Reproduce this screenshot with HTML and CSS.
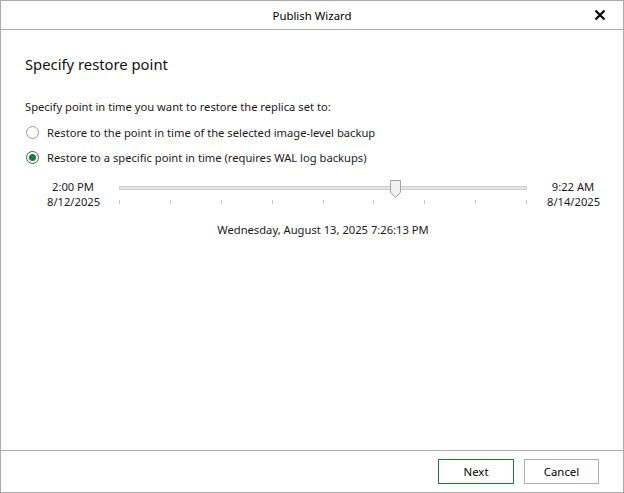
FILE: index.html
```html
<!DOCTYPE html>
<html>
<head>
<meta charset="utf-8">
<link rel="stylesheet" href="styles.css">
</head>
<body>
<div class="window">
  <div class="titlebar">
    <span class="title">Publish Wizard</span>
    <span class="close"><svg width="12" height="12" viewBox="0 0 12 12"><path d="M1.5 1.5 L10.5 10.5 M10.5 1.5 L1.5 10.5" stroke="#000" stroke-width="2.2" fill="none"/></svg></span>
  </div>
  <div class="content">
    <h1 class="heading">Specify restore point</h1>
    <p class="prompt">Specify point in time you want to restore the replica set to:</p>
    <div class="radios">
      <label class="radio"><span class="circle"></span>Restore to the point in time of the selected image-level backup</label>
      <label class="radio"><span class="circle checked"></span>Restore to a specific point in time (requires WAL log backups)</label>
    </div>
    <div class="slider-row">
      <div class="edge-label"><div>2:00 PM</div><div>8/12/2025</div></div>
      <div class="slider-col">
        <div class="slider">
          <div class="track"></div>
          <div class="thumb"><svg width="11" height="18" viewBox="0 0 11 18"><path d="M0.5 0.5 H10.5 V12.5 L5.5 17.3 L0.5 12.5 Z" fill="#f0f0f0" stroke="#a2a2a2"/></svg></div>
          <div class="ticks">
            <i></i><i></i><i></i><i></i><i></i><i></i><i></i><i></i><i></i>
          </div>
        </div>
        <div class="selected-date">Wednesday, August 13, 2025 7:26:13 PM</div>
      </div>
      <div class="edge-label"><div>9:22 AM</div><div>8/14/2025</div></div>
    </div>
  </div>
  <div class="footer">
    <button class="btn primary">Next</button>
    <button class="btn cancel">Cancel</button>
  </div>
</div>
</body>
</html>
```

FILE: styles.css
```css
* { box-sizing: border-box; }
html, body { margin: 0; padding: 0; background: #fff; }
body {
  font-family: "Noto Sans", "Open Sans", sans-serif;
  font-size: 11.2px;
  color: #1a1a1a;
}
.window {
  width: 624px;
  height: 493px;
  border: 1px solid #ababab;
  display: flex;
  flex-direction: column;
  background: #fff;
}
.titlebar {
  height: 29px;
  border-bottom: 1px solid #ababab;
  display: flex;
  align-items: center;
  justify-content: center;
  position: relative;
}
.title { font-size: 11.4px; color: #000; }
.close {
  position: absolute;
  right: 17px;
  top: 8px;
  width: 12px;
  height: 12px;
  display: flex;
}
.content {
  flex: 1;
  padding: 22px 24px 0 24px;
}
.heading {
  font-size: 14.8px;
  font-weight: normal;
  margin: 0;
  line-height: 24px;
  color: #111;
}
.prompt {
  margin: 22px 0 0 0;
  line-height: 18px;
}
.radios {
  display: flex;
  flex-direction: column;
  gap: 7px;
  margin-top: 7px;
}
.radio {
  display: flex;
  align-items: center;
  height: 18px;
}
.circle {
  width: 13px;
  height: 13px;
  border: 1px solid #9a9a9a;
  border-radius: 50%;
  margin: 0 8px 0 1px;
  display: flex;
  align-items: center;
  justify-content: center;
}
.circle.checked { border-color: #555; }
.circle.checked::after {
  content: "";
  width: 7px;
  height: 7px;
  border-radius: 50%;
  background: #14803a;
}
.slider-row {
  display: flex;
  margin-top: 13px;
  padding-left: 22px;
}
.edge-label {
  width: 52px;
  text-align: center;
  line-height: 15px;
}
.slider-col {
  width: 408px;
  margin: 0 20px;
  display: flex;
  flex-direction: column;
}
.slider {
  position: relative;
  height: 30px;
}
.track {
  position: absolute;
  left: 0;
  right: 0;
  top: 7px;
  height: 4px;
  background: #e6e6e6;
  border: 1px solid #cfcfcf;
}
.thumb {
  position: absolute;
  left: 271px;
  top: 1px;
  width: 11px;
  height: 18px;
  display: flex;
}
.ticks {
  position: absolute;
  left: 0;
  right: 0;
  top: 21px;
  height: 4px;
  display: flex;
  justify-content: space-between;
}
.ticks i {
  width: 1px;
  height: 4px;
  background: #c4c4c4;
}
.selected-date {
  text-align: center;
  margin-top: 13px;
  line-height: 16px;
}
.footer {
  height: 42px;
  border-top: 1px solid #ababab;
  display: flex;
  justify-content: flex-end;
  align-items: flex-start;
  gap: 10px;
  padding: 8px 24px 0 0;
}
.btn {
  width: 76px;
  height: 25px;
  background: #fff;
  border: 1px solid #adadad;
  font-family: inherit;
  font-size: 11.4px;
  color: #000;
  padding: 0;
}
.btn.cancel { width: 75px; }
.btn.primary { border-color: #1e7a3c; }
```
